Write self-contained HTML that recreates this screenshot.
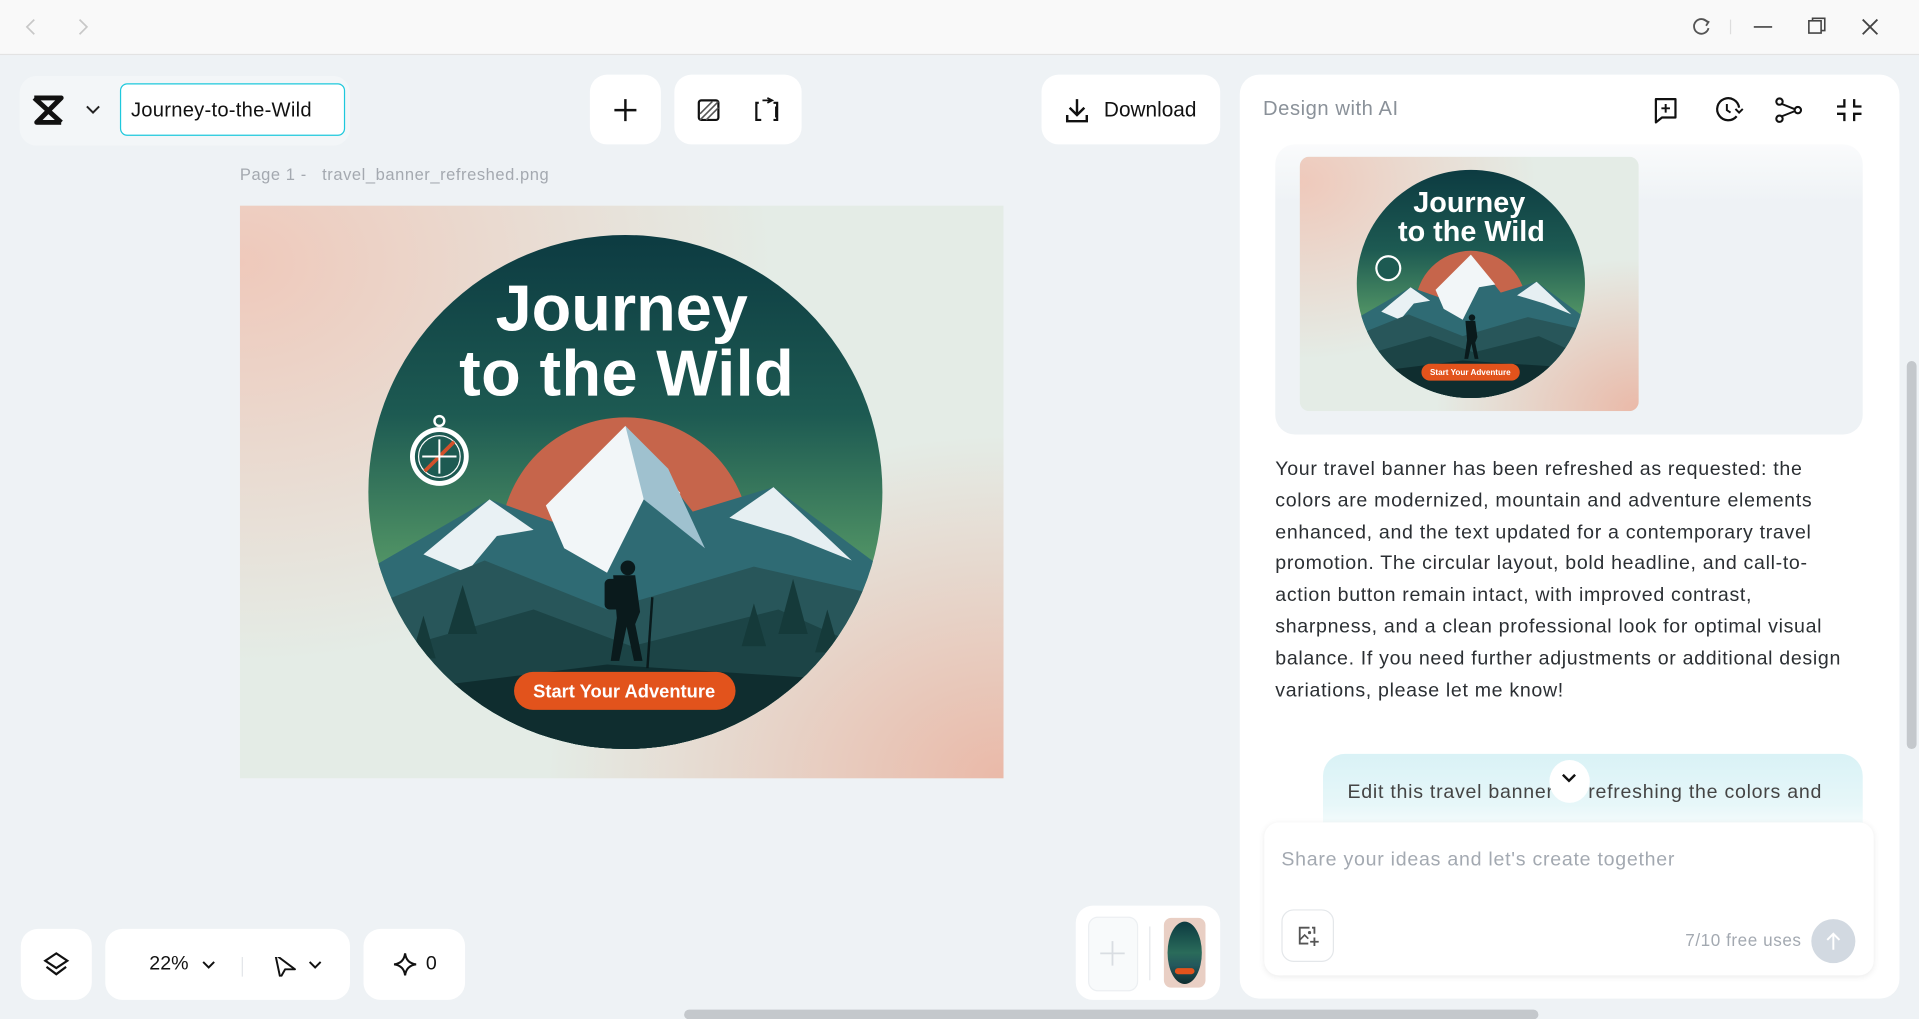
<!DOCTYPE html>
<html><head><meta charset="utf-8">
<style>
html,body{margin:0;padding:0;width:1919px;height:1017px;overflow:hidden;background:#eef2f5;font-family:"Liberation Sans",sans-serif;}
#w{position:absolute;left:0;top:0;width:1568px;height:831px;transform:scale(1.22386);transform-origin:0 0;background:#eef2f5;}
.a{position:absolute;}
.card{position:absolute;background:#fff;border-radius:14px;}
.ic{position:absolute;}
.ls{letter-spacing:0.45px;}
</style></head><body><div id="w">
<div class="a" style="left:0;top:0;width:1568px;height:44px;background:#f9f9f9;border-bottom:1px solid #e3e3e3"></div>
<svg class="ic" style="left:18px;top:13px" width="60" height="18"><path d="M10 3 L4 9 L10 15" stroke="#c8c8c8" stroke-width="1.4" fill="none"/><path d="M47 3 L53 9 L47 15" stroke="#c8c8c8" stroke-width="1.4" fill="none"/></svg>
<svg class="ic" style="left:1378px;top:12px" width="165" height="20">
<path d="M17 6 A6 6 0 1 0 18 11" stroke="#555" stroke-width="1.5" fill="none"/><path d="M14 4 L18 6 L16 9" stroke="#555" stroke-width="1.5" fill="none"/>
<line x1="36" y1="4" x2="36" y2="16" stroke="#ddd"/>
<line x1="55" y1="10" x2="70" y2="10" stroke="#444" stroke-width="1.4"/>
<rect x="100" y="5" width="10" height="10" stroke="#444" stroke-width="1.3" fill="none"/><path d="M103 5 V3 H113 V13 H110" stroke="#444" stroke-width="1.3" fill="none"/>
<path d="M144 4 L156 16 M156 4 L144 16" stroke="#444" stroke-width="1.5"/></svg>

<div class="a" style="left:16px;top:62px;width:270px;height:57px;background:#f3f6f8;border-radius:14px"></div>
<svg class="ic" style="left:26px;top:78px" width="60" height="24"><path d="M2 2 H24 L4 22 H24 M2 2 L24 22" stroke="#111" stroke-width="4" fill="none" stroke-linejoin="round"/><path d="M45 9 L50 14 L55 9" stroke="#222" stroke-width="1.6" fill="none"/></svg>
<div class="a ls" style="left:98px;top:68px;width:184px;height:43px;border:1px solid #1ec8dc;border-radius:6px;background:#fff;box-sizing:border-box;font-size:16.5px;line-height:42px;color:#111;padding-left:8px;white-space:nowrap;letter-spacing:0.2px">Journey-to-the-Wild</div>

<div class="card" style="left:482px;top:61px;width:58px;height:57px"></div>
<svg class="ic" style="left:500px;top:79px" width="22" height="22"><path d="M11 2 V20 M2 11 H20" stroke="#111" stroke-width="2"/></svg>
<div class="card" style="left:551px;top:61px;width:104px;height:57px"></div>
<svg class="ic" style="left:568px;top:79px" width="80" height="22"><rect x="3" y="3" width="16" height="16" rx="2" stroke="#111" stroke-width="1.8" fill="none"/><path d="M4 14 L14 4 M4 19 L19 4 M9 19 L19 9" stroke="#555" stroke-width="1.3"/><path d="M52 5 H50 V19 H54 M64 5 H67 V19 H64" stroke="#111" stroke-width="1.8" fill="none"/><path d="M55 3 H63 M59 1 L63 3 L59 5 M66 8 V17" stroke="#111" stroke-width="1.4" fill="none"/></svg>
<div class="card" style="left:851px;top:61px;width:146px;height:57px"></div>
<svg class="ic" style="left:869px;top:79px" width="22" height="22"><path d="M11 2 V15 M5 9 L11 15 L17 9 M3 15 V20 H19 V15" stroke="#111" stroke-width="2" fill="none"/></svg>
<div class="a" style="left:902px;top:79px;font-size:17px;color:#111;line-height:22px">Download</div>

<div class="a ls" style="left:196px;top:135px;font-size:13.5px;color:#a4a9b0">Page 1 -&nbsp;&nbsp; travel_banner_refreshed.png</div>

<svg class="a" style="left:196px;top:168px" width="624" height="468" viewBox="0 0 624 468">
<defs>
<radialGradient id="p1" cx="0" cy="0.1" r="0.7"><stop offset="0" stop-color="#efc9bb"/><stop offset="1" stop-color="#efc9bb" stop-opacity="0"/></radialGradient>
<radialGradient id="p2" cx="1" cy="1" r="0.6"><stop offset="0" stop-color="#eab9a8"/><stop offset="1" stop-color="#eab9a8" stop-opacity="0"/></radialGradient>
<linearGradient id="sky" x1="0" y1="0" x2="0" y2="1"><stop offset="0" stop-color="#0c3a41"/><stop offset="0.35" stop-color="#1d5a52"/><stop offset="0.6" stop-color="#4b8d63"/><stop offset="0.7" stop-color="#5e9e6b"/></linearGradient>
<clipPath id="cc"><circle cx="315" cy="234" r="210"/></clipPath>
</defs>
<rect width="624" height="468" fill="#e4ece6"/>
<rect width="624" height="468" fill="url(#p1)"/>
<rect width="624" height="468" fill="url(#p2)"/>
<g clip-path="url(#cc)">
<rect x="100" y="20" width="430" height="430" fill="url(#sky)"/>
<circle cx="315" cy="275" r="102" fill="#c6654b"/>
<polygon points="100,300 204,240 260,260 315,180 370,250 436,230 530,300 530,450 100,450" fill="#2f6b74"/>
<polygon points="150,285 204,240 240,265 210,270 185,300" fill="#e9f1f4"/>
<polygon points="250,245 315,180 360,235 330,240 300,300 265,280" fill="#f2f6f8"/>
<polygon points="315,180 350,215 380,280 330,240" fill="#9fc1cf"/>
<polygon points="400,255 436,230 500,290 450,270" fill="#e6eff2"/>
<polygon points="100,330 200,290 300,330 420,295 530,320 530,450 100,450" fill="#28565a"/>
<polygon points="100,370 240,330 320,360 440,330 530,370 530,450 100,450" fill="#1c4446"/>
<polygon points="100,400 300,375 530,390 530,450 100,450" fill="#0f2d2f"/>
<g fill="#153a3a"><polygon points="170,350 182,310 194,350"/><polygon points="140,370 150,335 160,370"/><polygon points="440,350 452,305 464,350"/><polygon points="470,365 480,330 490,365"/><polygon points="410,360 420,325 430,360"/></g>
<g fill="#0a1a1c"><circle cx="317" cy="296" r="6"/><path d="M305 302 h18 l4 30 l-4 10 l6 30 h-7 l-6 -28 l-6 28 h-7 l5 -35 z"/><rect x="298" y="305" width="14" height="25" rx="4"/><line x1="337" y1="320" x2="333" y2="378" stroke="#0a1a1c" stroke-width="2"/></g>
</g>
<g transform="translate(163,205)"><circle r="24" fill="#fff"/><circle r="20" fill="#1d5a52"/><circle r="17" fill="none" stroke="#fff" stroke-width="1"/><circle cy="-29" r="4" fill="none" stroke="#fff" stroke-width="2"/><path d="M-12 12 L12 -12" stroke="#d2502a" stroke-width="3"/><path d="M0 -14 V14 M-14 0 H14" stroke="#fff" stroke-width="1.6"/></g>
<text x="312" y="102" text-anchor="middle" font-family="Liberation Sans" font-weight="bold" font-size="53" fill="#fff">Journey</text>
<text x="316" y="155" text-anchor="middle" font-family="Liberation Sans" font-weight="bold" font-size="53" fill="#fff" letter-spacing="0.3">to the Wild</text>
<rect x="224" y="381" width="181" height="31" rx="15.5" fill="#e2531c"/>
<text x="314" y="402" text-anchor="middle" font-family="Liberation Sans" font-weight="bold" font-size="15" fill="#fff">Start Your Adventure</text>
</svg>

<div class="card" style="left:17px;top:759px;width:58px;height:58px"></div>
<svg class="ic" style="left:35px;top:777px" width="22" height="22"><path d="M11 2 L20 8 L11 14 L2 8 Z" stroke="#111" stroke-width="1.8" fill="none"/><path d="M3 13 L11 19 L19 13" stroke="#111" stroke-width="1.8" fill="none"/></svg>
<div class="card" style="left:86px;top:759px;width:200px;height:58px"></div>
<div class="a" style="left:122px;top:779px;font-size:16px;color:#111">22%</div>
<svg class="ic" style="left:165px;top:782px" width="100" height="16"><path d="M1 4 L5.5 8.5 L10 4" stroke="#111" stroke-width="1.6" fill="none"/><line x1="33" y1="-4" x2="33" y2="18" stroke="#e2e5e8"/><path d="M60 -2 L76 10 L68 10 L64 17 Z" stroke="#111" stroke-width="1.6" fill="none" stroke-linejoin="round"/><path d="M88 4 L92.5 8.5 L97 4" stroke="#111" stroke-width="1.6" fill="none"/></svg>
<div class="card" style="left:297px;top:759px;width:83px;height:58px"></div>
<svg class="ic" style="left:321px;top:778px" width="20" height="20"><path d="M10 1 Q11 9 19 10 Q11 11 10 19 Q9 11 1 10 Q9 9 10 1Z" stroke="#111" stroke-width="1.7" fill="none"/></svg>
<div class="a" style="left:348px;top:779px;font-size:16px;color:#111">0</div>

<div class="card" style="left:879px;top:740px;width:118px;height:77px"></div>
<div class="a" style="left:889px;top:749px;width:39px;height:59px;border:1px solid #eceff2;border-radius:8px;background:#f8fafb"></div>
<svg class="ic" style="left:898px;top:768px" width="22" height="22"><path d="M11 1 V21 M1 11 H21" stroke="#d9dde2" stroke-width="1.5"/></svg>
<div class="a" style="left:939px;top:757px;width:1px;height:44px;background:#e5e8eb"></div>
<div class="a" style="left:951px;top:750px;width:34px;height:57px;border-radius:6px;background:#e9cfc4;overflow:hidden">
<div class="a" style="left:3px;top:3px;width:28px;height:51px;border-radius:50%;background:linear-gradient(#0c3a41,#2a6b5a 50%,#24585c 70%,#0f2d2f)"></div>
<div class="a" style="left:9px;top:41px;width:16px;height:5px;border-radius:3px;background:#e2531c"></div>
</div>

<div class="a" style="left:1013px;top:61px;width:539px;height:755px;background:#fff;border-radius:16px;overflow:hidden">
<div class="a ls" style="left:19px;top:19px;font-size:16.5px;color:#8a9199">Design with AI</div>
<svg class="ic" style="left:336px;top:17px" width="180" height="24">
<path d="M4 3 H20 V18 H9 L4 22 Z" stroke="#111" stroke-width="1.8" fill="none" stroke-linejoin="round"/><path d="M12 7 V14 M8.5 10.5 H15.5" stroke="#111" stroke-width="1.6"/>
<path d="M70 17 A9 9 0 1 1 72 10" stroke="#111" stroke-width="1.8" fill="none"/><path d="M62 7 V12 L65 14" stroke="#111" stroke-width="1.6" fill="none"/><path d="M69 11 L72 14 L75 11" stroke="#111" stroke-width="1.6" fill="none"/>
<circle cx="105" cy="5" r="2.6" stroke="#111" stroke-width="1.7" fill="none"/><circle cx="105" cy="19" r="2.6" stroke="#111" stroke-width="1.7" fill="none"/><circle cx="120" cy="12" r="2.6" stroke="#111" stroke-width="1.7" fill="none"/><path d="M107 7 L117 11 M107 17 L117 13" stroke="#111" stroke-width="1.6"/>
<path d="M158 3 V9 H152 M166 3 V9 H172 M158 21 V15 H152 M166 21 V15 H172" stroke="#111" stroke-width="1.9" fill="none"/></svg>
<div class="a" style="left:29px;top:57px;width:480px;height:237px;border-radius:16px;background:linear-gradient(#fafbfc,#eef2f5 20%)"></div>
<svg class="a" style="left:49px;top:67px;border-radius:8px" width="277" height="208" viewBox="0 0 624 468">
<rect width="624" height="468" fill="#e4ece6"/><rect width="624" height="468" fill="url(#p1)"/><rect width="624" height="468" fill="url(#p2)"/>
<g clip-path="url(#cc)">
<rect x="100" y="20" width="430" height="430" fill="url(#sky)"/>
<circle cx="315" cy="275" r="102" fill="#c6654b"/>
<polygon points="100,300 204,240 260,260 315,180 370,250 436,230 530,300 530,450 100,450" fill="#2f6b74"/>
<polygon points="250,245 315,180 360,235 330,240 300,300 265,280" fill="#f2f6f8"/>
<polygon points="150,285 204,240 240,265 210,270 185,300" fill="#e9f1f4"/>
<polygon points="400,255 436,230 500,290 450,270" fill="#e6eff2"/>
<polygon points="100,330 200,290 300,330 420,295 530,320 530,450 100,450" fill="#28565a"/>
<polygon points="100,370 240,330 320,360 440,330 530,370 530,450 100,450" fill="#1c4446"/>
<polygon points="100,400 300,375 530,390 530,450 100,450" fill="#0f2d2f"/>
<g fill="#0a1a1c"><circle cx="317" cy="296" r="6"/><path d="M305 302 h18 l4 30 l-4 10 l6 30 h-7 l-6 -28 l-6 28 h-7 l5 -35 z"/></g>
</g>
<g transform="translate(163,205)"><circle r="24" fill="#fff"/><circle r="20" fill="#1d5a52"/></g>
<text x="312" y="102" text-anchor="middle" font-family="Liberation Sans" font-weight="bold" font-size="53" fill="#fff">Journey</text>
<text x="316" y="155" text-anchor="middle" font-family="Liberation Sans" font-weight="bold" font-size="53" fill="#fff">to the Wild</text>
<rect x="224" y="381" width="181" height="31" rx="15.5" fill="#e2531c"/>
<text x="314" y="402" text-anchor="middle" font-family="Liberation Sans" font-weight="bold" font-size="15" fill="#fff">Start Your Adventure</text>
</svg>
<div class="a" style="left:29px;top:310px;font-size:16px;line-height:25.8px;color:#2b2f33;white-space:nowrap;letter-spacing:0.55px">Your travel banner has been refreshed as requested: the<br>colors are modernized, mountain and adventure elements<br>enhanced, and the text updated for a contemporary travel<br>promotion. The circular layout, bold headline, and call-to-<br>action button remain intact, with improved contrast,<br>sharpness, and a clean professional look for optimal visual<br>balance. If you need further adjustments or additional design<br>variations, please let me know!</div>
<div class="a" style="left:68px;top:555px;width:441px;height:70px;border-radius:18px 18px 0 0;background:linear-gradient(#d9f2f6,#e7f7f9 60%,#fff)"></div>
<div class="a" style="left:88px;top:578px;font-size:16px;color:#444;white-space:nowrap;letter-spacing:0.6px">Edit this travel banner by refreshing the colors and</div>
<div class="a" style="left:253px;top:560px;width:33px;height:35px;border-radius:50%;background:#fff"></div>
<svg class="ic" style="left:262px;top:570px" width="14" height="10"><path d="M2 2 L7 7 L12 2" stroke="#111" stroke-width="2" fill="none"/></svg>
<div class="a" style="left:20px;top:611px;width:498px;height:125px;border-radius:12px;background:#fff;box-shadow:0 1px 5px rgba(0,0,0,0.08)"></div>
<div class="a" style="left:34px;top:633px;font-size:16px;color:#a3a9b1;letter-spacing:0.6px">Share your ideas and let's create together</div>
<div class="a" style="left:34px;top:682px;width:43px;height:43px;border:1px solid #e4e7ea;border-radius:10px;box-sizing:border-box"></div>
<svg class="ic" style="left:47px;top:695px" width="18" height="18"><path d="M10 2 H2 V15 H9" stroke="#555" stroke-width="1.5" fill="none"/><path d="M2 12 L6 8 L9 11" stroke="#555" stroke-width="1.4" fill="none"/><circle cx="10" cy="6" r="1.3" fill="#555"/><path d="M14 10 V17 M10.5 13.5 H17.5" stroke="#555" stroke-width="1.5"/><path d="M12 2 H14 V7" stroke="#555" stroke-width="1.5" fill="none"/></svg>
<div class="a ls" style="left:364px;top:699px;font-size:14px;color:#a3a9b1">7/10 free uses</div>
<div class="a" style="left:467px;top:690px;width:36px;height:36px;border-radius:50%;background:#d2d9e1"></div>
<svg class="ic" style="left:477px;top:699px" width="16" height="18"><path d="M8 16 V3 M3 8 L8 3 L13 8" stroke="#fff" stroke-width="1.6" fill="none"/></svg>
</div>
<div class="a" style="left:1558px;top:295px;width:8px;height:317px;border-radius:4px;background:#c4c8cc"></div>
<div class="a" style="left:559px;top:825px;width:698px;height:8px;border-radius:4px;background:#c4c8cc"></div>
</div></body></html>
